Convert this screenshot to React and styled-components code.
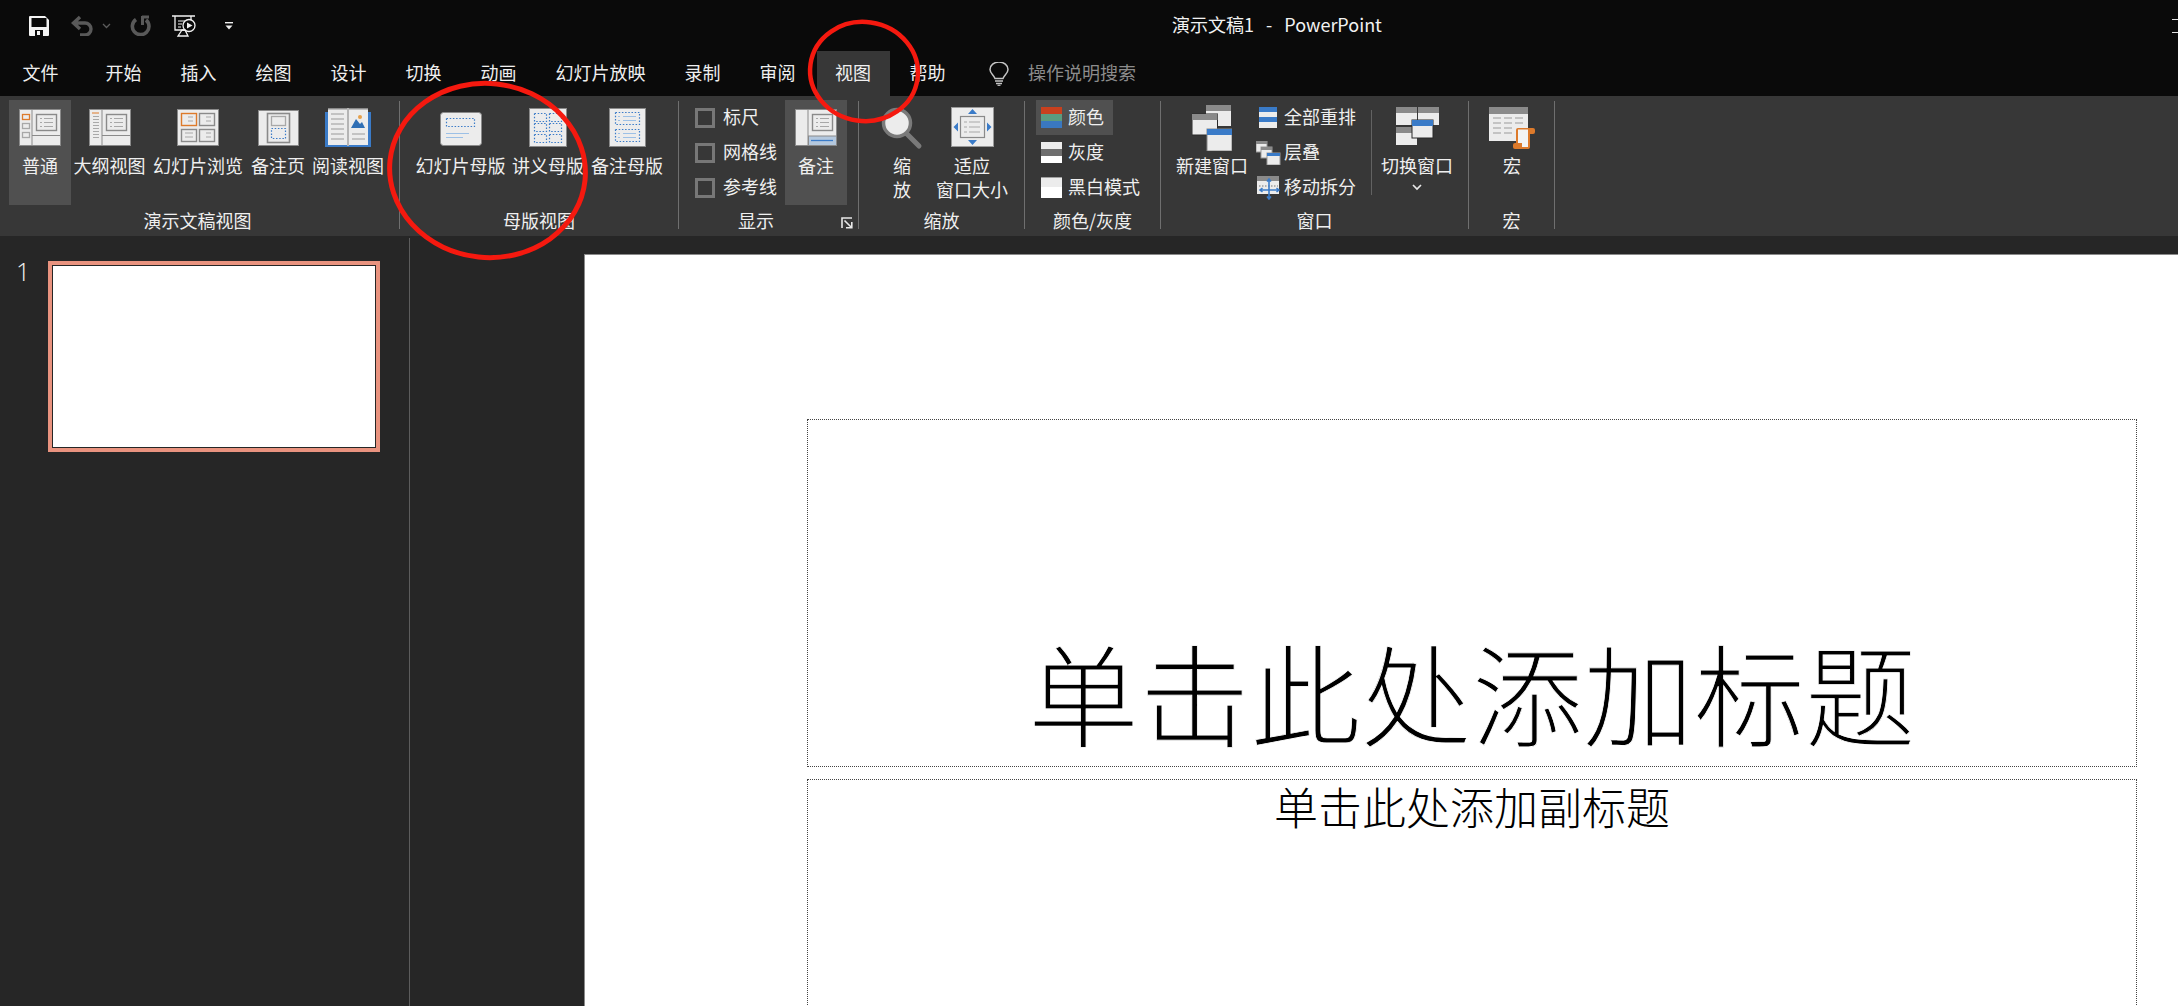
import React from 'react';
import styled, { createGlobalStyle } from 'styled-components';

const Global = createGlobalStyle`
  html, body { margin: 0; padding: 0; background: #262626; }
  body { font-family: "Noto Sans CJK SC", "Noto Sans", sans-serif; }
`;

const Page = styled.div`
  position: relative;
  width: 2178px;
  height: 1006px;
  overflow: hidden;
  display: flex;
  flex-direction: column;
  background: #262626;
  color: #efefef;
  font-size: 18px;
`;
const TitleBar = styled.div`
  display: flex;
  align-items: center;
  height: 51px;
  flex: none;
  background: #0a0a0a;
`;
const Qat = styled.div`
  display: flex;
  align-items: center;
  flex: 0 0 1172px;
  padding-left: 29px;
  box-sizing: border-box;
  svg { flex: none; display: block; }
`;
const DocTitle = styled.div`
  font-size: 18px;
  white-space: nowrap;
  color: #f2f2f2;
  word-spacing: 8px;
  margin-bottom: 4px;
`;
const WinControl = styled.div`
  margin-left: auto;
  width: 6px;
  height: 12px;
  border-top: 1.5px solid #e0e0e0;
  border-bottom: 1.5px solid #e0e0e0;
`;
const TabBar = styled.div`
  display: flex;
  align-items: stretch;
  height: 45px;
  flex: none;
  background: #0a0a0a;
  padding-left: 3px;
`;
const Tab = styled.div`
  display: flex;
  align-items: center;
  justify-content: center;
  padding: 0 ${p => p.$pr ?? 19.5}px 3px ${p => p.$pl ?? 19.5}px;
  margin-left: ${p => p.$ml ?? 0}px;
  margin-right: ${p => p.$mr ?? 0}px;
  line-height: 44px;
  white-space: nowrap;
  background: ${p => (p.$active ? '#373737' : 'transparent')};
`;
const Search = styled.div`
  display: flex;
  align-items: center;
  gap: 19px;
  margin-left: 24px;
  color: #8c8c8c;
  padding-bottom: 3px;
  svg { display: block; }
`;
const Ribbon = styled.div`
  display: flex;
  align-items: flex-start;
  height: 140px;
  flex: none;
  padding-top: 4px;
  box-sizing: border-box;
  background: #373737;
`;
const Group = styled.div`
  display: flex;
  flex-direction: column;
  width: ${p => p.$w}px;
  height: 132px;
  flex: none;
`;
const GroupBody = styled.div`
  display: flex;
  align-items: flex-start;
  height: 105px;
  padding-left: ${p => p.$pl ?? 0}px;
`;
const Footer = styled.div`
  display: flex;
  align-items: center;
  height: 24px;
  margin-top: 3px;
  padding-right: ${p => p.$pr ?? 0}px;
`;
const GroupLabel = styled.div`
  flex: ${p => (p.$w ? `0 0 ${p.$w}px` : 1)};
  text-align: center;
  line-height: 24px;
  white-space: nowrap;
`;
const Launcher = styled.div`
  margin-left: 8px;
  width: 12px;
  height: 12px;
  margin-top: 5px;
  svg { display: block; }
`;
const Sep = styled.div`
  flex: none;
  width: 1px;
  height: 128px;
  margin-top: 1px;
  background: #6f6f6f;
`;
const ShortSep = styled.div`
  flex: none;
  width: 1px;
  height: 85px;
  margin-top: 10px;
  margin-left: ${p => p.$ml}px;
  background: #626262;
`;
const LargeButton = styled.div`
  flex: none;
  display: flex;
  flex-direction: column;
  align-items: center;
  width: ${p => p.$w}px;
  height: 105px;
  padding-top: 5px;
  box-sizing: border-box;
  margin-left: ${p => p.$ml ?? 0}px;
  background: ${p => (p.$active ? '#505050' : 'transparent')};
  svg { display: block; flex: none; }
`;
const Caption = styled.div`
  margin-top: 2px;
  line-height: 24px;
  text-align: center;
  white-space: nowrap;
`;
const Stack = styled.div`
  flex: none;
  display: flex;
  flex-direction: column;
  width: ${p => p.$w}px;
  margin-left: ${p => p.$ml ?? 0}px;
`;
const SmallRow = styled.div`
  display: flex;
  align-items: center;
  height: 35px;
  gap: ${p => p.$gap ?? 6}px;
  padding-left: ${p => p.$pl ?? 0}px;
  white-space: nowrap;
  align-self: flex-start;
  padding-right: ${p => p.$pr ?? 0}px;
  background: ${p => (p.$active ? '#505050' : 'transparent')};
  svg { display: block; flex: none; }
`;
const RowText = styled.span`
  line-height: 24px;
  margin-bottom: 3px;
`;
const Check = styled.span`
  flex: none;
  width: 20px;
  height: 20px;
  box-sizing: border-box;
  border: 3px solid #777;
`;
const Workspace = styled.div`
  flex: 1;
  display: flex;
  min-height: 0;
`;
const ThumbPane = styled.div`
  flex: none;
  display: flex;
  align-items: flex-start;
  width: 410px;
  box-sizing: border-box;
  margin-top: 2px;
  padding: 23px 0 0 16px;
  border-right: 1px solid #5c5c5c;
`;
const ThumbNum = styled.div`
  font-family: "Open Sans", sans-serif;
  font-weight: 300;
  font-size: 25px;
  line-height: 20px;
  width: 32px;
  color: #f4f4f4;
`;
const Thumb = styled.div`
  width: 332px;
  height: 191px;
  box-sizing: border-box;
  border: 4px solid #e9937f;
  background: #fff;
  box-shadow: inset 0 0 0 1px #262626;
`;
const Editor = styled.div`
  flex: 1;
  min-width: 0;
  padding: 18px 0 0 174px;
`;
const Slide = styled.div`
  height: 1000px;
  box-sizing: border-box;
  padding: 164px 0 0 222px;
  background: #fff;
  border-left: 1px solid #8a8a8a;
  border-top: 1px solid #8a8a8a;
`;
const TitleBox = styled.div`
  display: flex;
  align-items: flex-end;
  justify-content: center;
  width: 1330px;
  height: 348px;
  box-sizing: border-box;
  border: 1px dotted #444;
`;
const TitleText = styled.div`
  font-size: 111px;
  line-height: 120px;
  font-weight: 300;
  color: #000;
  white-space: nowrap;
  padding-bottom: 15px;
  -webkit-text-stroke: 0.8px #fff;
`;
const SubBox = styled(TitleBox)`
  align-items: flex-start;
  height: 400px;
  margin-top: 12px;
`;
const SubText = styled.div`
  font-size: 44px;
  line-height: 52px;
  font-weight: 300;
  color: #000;
  white-space: nowrap;
`;
const Annotations = styled.svg`
  position: absolute;
  left: 0;
  top: 0;
  pointer-events: none;
`;

const G = '#8a8a8a';
const L = '#ececec';
const A = '#a8a8a8';
const B = '#3a7bc8';
const LB = '#9cc0e6';
const O = '#dd7a2b';

const Ic = ({ w, h = 46, children }) => (
  <svg width={w} height={h} viewBox={`0 0 ${w} ${h}`}>{children}</svg>
);
const Lines = ({ x1, x2, ys, c = A, sw = 1 }) => (
  <>
    {ys.map(y => <line key={y} x1={x1} x2={x2} y1={y} y2={y} stroke={c} strokeWidth={sw} />)}
  </>
);
const Box = ({ x, y, w, h, s = G, f = 'none', sw = 1 }) => (
  <rect x={x + 0.5} y={y + 0.5} width={w - 1} height={h - 1} fill={f} stroke={s} strokeWidth={sw} />
);
const Dot = ({ x, y, w, h }) => (
  <rect x={x + 0.5} y={y + 0.5} width={w - 1} height={h - 1} fill="none" stroke={B} strokeWidth="1.2" strokeDasharray="1.5 1.7" />
);
const Win = ({ x, y, w, h, tb = 6, c = G, edge }) => (
  <g>
    <rect x={x} y={y} width={w} height={h} fill={L} stroke={edge || 'none'} strokeWidth={edge ? 1 : 0} />
    <rect x={x} y={y} width={w} height={tb} fill={c} />
  </g>
);
const TextBox = ({ x, y }) => (
  <>
    <Box x={x} y={y} w={21} h={17} sw={1.4} />
    <Lines x1={x + 8} x2={x + 17} ys={[y + 4.5, y + 8.5, y + 12.5]} />
    <Lines x1={x + 4} x2={x + 6} ys={[y + 4.5, y + 8.5, y + 12.5]} />
  </>
);

const NormalIcon = () => (
  <Ic w={42}>
    <Box x={0} y={4} w={42} h={37} f={L} />
    <line x1={13} x2={13} y1={4} y2={41} stroke={G} />
    <line x1={13} x2={42} y1={30.5} y2={30.5} stroke={G} />
    <TextBox x={17} y={9} />
    <Box x={3} y={9} w={8} h={6} s={O} sw={1.3} />
    <Box x={3} y={18} w={8} h={6} s={A} sw={1.3} />
    <Box x={3} y={27} w={8} h={6} s={A} sw={1.3} />
  </Ic>
);
const OutlineIcon = () => (
  <Ic w={42}>
    <Box x={0} y={4} w={42} h={37} f={L} />
    <line x1={13} x2={13} y1={4} y2={41} stroke={G} />
    <line x1={13} x2={42} y1={30.5} y2={30.5} stroke={G} />
    <TextBox x={17} y={9} />
    <line x1={3} x2={10} y1={8} y2={8} stroke={O} />
    <Lines x1={4} x2={10} ys={[11.5, 14.5, 17.5, 20.5, 23.5, 26.5, 29.5, 32.5]} />
  </Ic>
);
const SorterIcon = () => (
  <Ic w={42}>
    <Box x={0} y={4} w={42} h={37} f={L} />
    <Box x={4} y={8} w={16} h={13} s={O} sw={1.4} />
    <Box x={22} y={8} w={16} h={13} sw={1.4} />
    <Box x={4} y={24} w={16} h={13} sw={1.4} />
    <Box x={22} y={24} w={16} h={13} sw={1.4} />
    <Lines x1={11} x2={16} ys={[12, 16]} />
    <Lines x1={29} x2={34} ys={[12, 16]} />
    <Lines x1={8} x2={16} ys={[28, 32]} />
    <Lines x1={29} x2={34} ys={[28, 32]} />
  </Ic>
);
const NotesPageIcon = () => (
  <Ic w={41}>
    <Box x={0} y={5} w={41} h={36} f={L} />
    <Box x={9} y={8} w={23} h={30} sw={1.6} />
    <Box x={13} y={11} w={15} h={10} s={A} sw={1.3} />
    <Dot x={13} y={23} w={15} h={11} />
  </Ic>
);
const ReadingIcon = () => (
  <Ic w={46}>
    <rect x={0} y={7} width={46} height={35} fill={B} />
    <rect x={3} y={3} width={19} height={37} fill={L} />
    <rect x={24} y={3} width={19} height={37} fill={L} />
    <rect x={3} y={3} width={40} height={1.5} fill={G} />
    <rect x={22} y={3} width={2} height={38} fill="#b5b5b5" />
    <Lines x1={6} x2={19} ys={[9, 14, 19, 24, 29, 34]} c="#9a9a9a" />
    <Lines x1={27} x2={40} ys={[29, 34]} c="#9a9a9a" />
    <circle cx={35} cy={12} r={2} fill="#e6a04a" />
    <path d="M26 23 L31 14 L35 19 L37 17 L40 23Z" fill="#2f6fb5" />
  </Ic>
);
const SlideMasterIcon = () => (
  <Ic w={42}>
    <rect x={0.5} y={7.5} width={41} height={33} rx={3} fill={L} stroke={G} />
    <Dot x={6} y={13} w={29} h={9} />
    <Lines x1={6} x2={29} ys={[28.5]} c={LB} />
    <Lines x1={6} x2={23} ys={[32.5]} c={LB} />
  </Ic>
);
const HandoutIcon = () => (
  <Ic w={38}>
    <Box x={0} y={3} w={38} h={39} f={L} />
    {[8, 18, 29].map(y => (
      <g key={y}>
        <Dot x={5} y={y} w={13} h={9} />
        <Dot x={20} y={y} w={13} h={9} />
      </g>
    ))}
  </Ic>
);
const NotesMasterIcon = () => (
  <Ic w={37}>
    <Box x={0} y={3} w={37} h={39} f={L} />
    <Dot x={6} y={7} w={25} h={13} />
    <Dot x={6} y={24} w={25} h={13} />
    <Lines x1={14} x2={27} ys={[11.5, 15.5]} c={LB} />
    <Lines x1={14} x2={27} ys={[28.5, 32.5]} c={LB} />
    <Lines x1={9} x2={11} ys={[11.5, 15.5, 28.5, 32.5]} c={LB} />
  </Ic>
);
const NotesIcon = () => (
  <Ic w={42}>
    <Box x={0} y={4} w={42} h={37} f={L} />
    <line x1={13} x2={13} y1={4} y2={41} stroke={G} />
    <rect x={13.5} y={31} width={28} height={9.5} fill="#b4c8de" stroke={G} />
    <line x1={16} x2={38} y1={35.5} y2={35.5} stroke={B} strokeWidth="1.3" />
    <TextBox x={17} y={9} />
  </Ic>
);
const ZoomIcon = () => (
  <Ic w={42}>
    <line x1={25} x2={38} y1={28} y2={41} stroke="#7a7a7a" strokeWidth="5" strokeLinecap="round" />
    <circle cx={16} cy={18} r={13.5} fill={L} stroke="#7a7a7a" strokeWidth="3.5" />
  </Ic>
);
const FitIcon = () => (
  <Ic w={43}>
    <Box x={0} y={2} w={43} h={40} f={L} s="#9a9a9a" />
    <rect x={9.5} y={11.5} width={24} height={21} fill={L} stroke={G} strokeWidth="1.2" />
    <Lines x1={18} x2={29} ys={[17, 22, 27]} />
    <Lines x1={13} x2={16} ys={[17, 22, 27]} />
    <path d="M21.5 4 L26 9 H17Z M21.5 40 L26 35 H17Z M2.5 22 L7 17.5 V26.5Z M40.5 22 L36 17.5 V26.5Z" fill={B} />
  </Ic>
);
const Bands = ({ a, b, c }) => (
  <Ic w={21} h={21}>
    <rect width={21} height={7} fill={a} />
    <rect y={7} width={21} height={7} fill={b} />
    <rect y={14} width={21} height={7} fill={c} />
  </Ic>
);
const BwIcon = () => (
  <Ic w={21} h={21}>
    <rect width={21} height={21} fill="#fff" />
    <rect width={21} height={10} fill={L} />
    <rect width={21} height={1} fill="#a0a0a0" />
  </Ic>
);
const NewWindowIcon = () => (
  <Ic w={40}>
    <Win x={14} y={0} w={25} h={21} />
    <Win x={0} y={9} w={25.5} h={21} edge="#2a2a2a" />
    <Win x={15} y={24} w={25} h={22} c={B} edge="#888" />
  </Ic>
);
const ArrangeIcon = () => (
  <Ic w={25} h={21}>
    <rect x={3} y={0} width={18} height={21} fill={L} />
    <rect x={3} y={0} width={18} height={5} fill={B} />
    <rect x={3} y={10} width={18} height={5} fill={B} />
  </Ic>
);
const CascadeIcon = () => (
  <Ic w={25} h={24}>
    <Win x={0} y={0} w={11} h={11} tb={3} edge="#999" />
    <Win x={5} y={6} w={11} h={11} tb={3} edge="#999" />
    <Win x={11} y={12} w={13} h={12} tb={3} c={B} edge="#999" />
  </Ic>
);
const SplitIcon = () => (
  <Ic w={25} h={24}>
    <Win x={1} y={0} w={22} h={18} tb={5} />
    <line x1={3} x2={22} y1={10} y2={10} stroke="#777" strokeDasharray="1.5 1.5" />
    <path d="M13 3 V23 M4 14 H23 M11 5.5 L13 3 L15 5.5 M11 20.5 L13 23 L15 20.5 M6.5 12 L4 14 L6.5 16 M20.5 12 L23 14 L20.5 16" fill="none" stroke={B} strokeWidth="1.6" />
  </Ic>
);
const SwitchIcon = () => (
  <Ic w={43}>
    <Win x={0} y={2} w={21} h={18} />
    <Win x={22} y={2} w={21} h={18} />
    <Win x={0} y={22} w={21} h={18} />
    <Win x={16} y={15} w={21} h={18} c={B} edge="#2a2a2a" />
  </Ic>
);
const MacroIcon = () => (
  <Ic w={46}>
    <Win x={0} y={2} w={39} h={34} tb={7} />
    <Lines x1={4} x2={12} ys={[13, 18, 23, 28]} c="#a8a8a8" sw={1.2} />
    <Lines x1={15} x2={23} ys={[13, 18, 23, 28]} c="#a8a8a8" sw={1.2} />
    <Lines x1={26} x2={34} ys={[13, 18]} c="#a8a8a8" sw={1.2} />
    <rect x={37} y={23} width={9} height={6} rx={2} fill={O} />
    <rect x={24} y={38} width={16} height={6} rx={2} fill={O} />
    <rect x={27} y={23} width={14} height={21} rx={2} fill={O} />
    <rect x={29} y={24.5} width={10} height={13.5} fill="#f3f3f3" />
    <rect x={33} y={38} width={6} height={4} fill="#f3f3f3" />
  </Ic>
);
const SaveIcon = () => (
  <svg width="20" height="20" viewBox="0 0 20 20">
    <path d="M0 1 Q0 0 1 0 H16 L20 4 V19 Q20 20 19 20 H1 Q0 20 0 19Z" fill="#f4f4f4" />
    <rect x="2.5" y="2" width="15" height="9" fill="#0a0a0a" />
    <rect x="6" y="14" width="8" height="6" fill="#0a0a0a" />
    <rect x="8" y="15" width="3" height="4" fill="#f4f4f4" />
  </svg>
);
const UndoIcon = () => (
  <svg width="23" height="21" viewBox="0 0 23 21" style={{ marginLeft: 22 }}>
    <path d="M9 2 L2.5 8 L9 14 M3 8 H14 a6 6 0 0 1 0 12 H9" fill="none" stroke="#595959" strokeWidth="3.4" />
  </svg>
);
const TinyChevron = () => (
  <svg width="9" height="6" viewBox="0 0 9 6" style={{ marginLeft: 8 }}>
    <path d="M1 1 L4.5 4.5 L8 1" fill="none" stroke="#5c5c5c" strokeWidth="1.3" />
  </svg>
);
const RedoIcon = () => (
  <svg width="21" height="21" viewBox="0 0 21 21" style={{ marginLeft: 19 }}>
    <path d="M6 4.5 A8.3 8.3 0 1 0 16 5" fill="none" stroke="#595959" strokeWidth="3.6" />
    <path d="M12.5 1 V10 M12 2 H19" fill="none" stroke="#595959" strokeWidth="3" />
  </svg>
);
const ShowIcon = () => (
  <svg width="24" height="22" viewBox="0 0 24 22" style={{ marginLeft: 21 }}>
    <path d="M0 1 H23 M3 1.5 V15 H15 M19 1.5 V5" fill="none" stroke="#f2f2f2" strokeWidth="1.3" />
    <path d="M6 6 H13 M6 9 H10 M6 12 H9" stroke="#f2f2f2" strokeWidth="1.1" />
    <circle cx="17" cy="10.5" r="6" fill="#0a0a0a" stroke="#f2f2f2" strokeWidth="1.3" />
    <path d="M15 7.5 L20.5 10.5 L15 13.5Z" fill="#f2f2f2" />
    <path d="M10 15 L6 21 H16 L13 15Z" fill="none" stroke="#f2f2f2" strokeWidth="1.3" />
  </svg>
);
const QatMore = () => (
  <svg width="8" height="8" viewBox="0 0 8 8" style={{ marginLeft: 29 }}>
    <rect width="8" height="1.4" fill="#eee" />
    <path d="M0.5 3.5 H7.5 L4 7.5Z" fill="#eee" />
  </svg>
);
const Bulb = () => (
  <svg width="20" height="24" viewBox="0 0 20 24" style={{ marginTop: 3 }}>
    <path d="M6 16.5 C5 13 1 11.5 1 7.5 A9 7.5 0 0 1 19 7.5 C19 11.5 15 13 14 16.5 Z" fill="none" stroke="#c4c4c4" strokeWidth="1.5" />
    <path d="M6 19 H14 M7 21.5 H13" stroke="#c4c4c4" strokeWidth="1.5" />
    <path d="M8.5 23.3 H11.5" stroke="#c4c4c4" strokeWidth="1.2" />
  </svg>
);
const LaunchIcon = () => (
  <svg width="12" height="12" viewBox="0 0 12 12">
    <path d="M1 11 V1 H11" fill="none" stroke="#e8e8e8" strokeWidth="1.6" />
    <path d="M3.5 3.5 L10 10 M5 10.8 H10.8 V5" fill="none" stroke="#e8e8e8" strokeWidth="1.6" />
  </svg>
);
const Chevron = () => (
  <svg width="10" height="7" viewBox="0 0 10 7" style={{ marginTop: 7 }}>
    <path d="M1 1 L5 5 L9 1" fill="none" stroke="#e8e8e8" strokeWidth="1.7" />
  </svg>
);

const tabs = ['开始', '插入', '绘图', '设计', '切换', '动画', '幻灯片放映', '录制', '审阅'];

export default function App() {
  return (
    <Page>
      <Global />
      <TitleBar>
        <Qat>
          <SaveIcon />
          <UndoIcon />
          <TinyChevron />
          <RedoIcon />
          <ShowIcon />
          <QatMore />
        </Qat>
        <DocTitle>演示文稿1 - PowerPoint</DocTitle>
        <WinControl />
      </TitleBar>
      <TabBar>
        <Tab $mr={8}>文件</Tab>
        {tabs.map(t => <Tab key={t}>{t}</Tab>)}
        <Tab $active $ml={2} $pl={18} $pr={19}>视图</Tab>
        <Tab>帮助</Tab>
        <Search><Bulb />操作说明搜索</Search>
      </TabBar>
      <Ribbon>
        <Group $w={399}>
          <GroupBody $pl={9}>
            <LargeButton $w={62} $active><NormalIcon /><Caption>普通</Caption></LargeButton>
            <LargeButton $w={77}><OutlineIcon /><Caption>大纲视图</Caption></LargeButton>
            <LargeButton $w={100}><SorterIcon /><Caption>幻灯片浏览</Caption></LargeButton>
            <LargeButton $w={60}><NotesPageIcon /><Caption>备注页</Caption></LargeButton>
            <LargeButton $w={80}><ReadingIcon /><Caption>阅读视图</Caption></LargeButton>
          </GroupBody>
          <Footer $pr={4}><GroupLabel>演示文稿视图</GroupLabel></Footer>
        </Group>
        <Sep />
        <Group $w={278}>
          <GroupBody $pl={14}>
            <LargeButton $w={93}><SlideMasterIcon /><Caption>幻灯片母版</Caption></LargeButton>
            <LargeButton $w={82}><HandoutIcon /><Caption>讲义母版</Caption></LargeButton>
            <LargeButton $w={76}><NotesMasterIcon /><Caption>备注母版</Caption></LargeButton>
          </GroupBody>
          <Footer><GroupLabel>母版视图</GroupLabel></Footer>
        </Group>
        <Sep />
        <Group $w={179}>
          <GroupBody $pl={16}>
            <Stack $w={90}>
              <SmallRow $gap={8}><Check /><RowText>标尺</RowText></SmallRow>
              <SmallRow $gap={8}><Check /><RowText>网格线</RowText></SmallRow>
              <SmallRow $gap={8}><Check /><RowText>参考线</RowText></SmallRow>
            </Stack>
            <LargeButton $w={62} $active><NotesIcon /><Caption>备注</Caption></LargeButton>
          </GroupBody>
          <Footer>
            <GroupLabel $w={154}>显示</GroupLabel>
            <Launcher><LaunchIcon /></Launcher>
          </Footer>
        </Group>
        <Sep />
        <Group $w={165}>
          <GroupBody $pl={22}>
            <LargeButton $w={42}><ZoomIcon /><Caption>缩<br />放</Caption></LargeButton>
            <LargeButton $w={72} $ml={13}><FitIcon /><Caption>适应<br />窗口大小</Caption></LargeButton>
          </GroupBody>
          <Footer><GroupLabel>缩放</GroupLabel></Footer>
        </Group>
        <Sep />
        <Group $w={135}>
          <GroupBody $pl={11}>
            <Stack $w={120}>
              <SmallRow $active $pl={5} $pr={9}><Bands a="#c8401e" b="#5b9b7f" c="#3a78c0" /><RowText>颜色</RowText></SmallRow>
              <SmallRow $pl={5}><Bands a="#ececec" b="#6e6e6e" c="#ffffff" /><RowText>灰度</RowText></SmallRow>
              <SmallRow $pl={5}><BwIcon /><RowText>黑白模式</RowText></SmallRow>
            </Stack>
          </GroupBody>
          <Footer><GroupLabel>颜色/灰度</GroupLabel></Footer>
        </Group>
        <Sep />
        <Group $w={307}>
          <GroupBody $pl={14}>
            <LargeButton $w={74}><NewWindowIcon /><Caption>新建窗口</Caption></LargeButton>
            <Stack $w={100} $ml={7}>
              <SmallRow $gap={3}><ArrangeIcon /><RowText>全部重排</RowText></SmallRow>
              <SmallRow $gap={3}><CascadeIcon /><RowText>层叠</RowText></SmallRow>
              <SmallRow $gap={3}><SplitIcon /><RowText>移动拆分</RowText></SmallRow>
            </Stack>
            <ShortSep $ml={15} />
            <LargeButton $w={74} $ml={8}>
              <SwitchIcon />
              <Caption>切换窗口</Caption>
              <Chevron />
            </LargeButton>
          </GroupBody>
          <Footer><GroupLabel>窗口</GroupLabel></Footer>
        </Group>
        <Sep />
        <Group $w={85}>
          <GroupBody $pl={21}>
            <LargeButton $w={44}><MacroIcon /><Caption>宏</Caption></LargeButton>
          </GroupBody>
          <Footer><GroupLabel>宏</GroupLabel></Footer>
        </Group>
        <Sep />
      </Ribbon>
      <Workspace>
        <ThumbPane>
          <ThumbNum>1</ThumbNum>
          <Thumb />
        </ThumbPane>
        <Editor>
          <Slide>
            <TitleBox><TitleText>单击此处添加标题</TitleText></TitleBox>
            <SubBox><SubText>单击此处添加副标题</SubText></SubBox>
          </Slide>
        </Editor>
      </Workspace>
      <Annotations width="2178" height="1006" viewBox="0 0 2178 1006">
        <ellipse cx="864" cy="71.5" rx="54" ry="49.5" fill="none" stroke="#f5190f" strokeWidth="4.5" transform="rotate(8 864 71.5)" />
        <ellipse cx="487.5" cy="170.5" rx="98" ry="87" fill="none" stroke="#f5190f" strokeWidth="5" transform="rotate(6 487.5 170.5)" />
      </Annotations>
    </Page>
  );
}
